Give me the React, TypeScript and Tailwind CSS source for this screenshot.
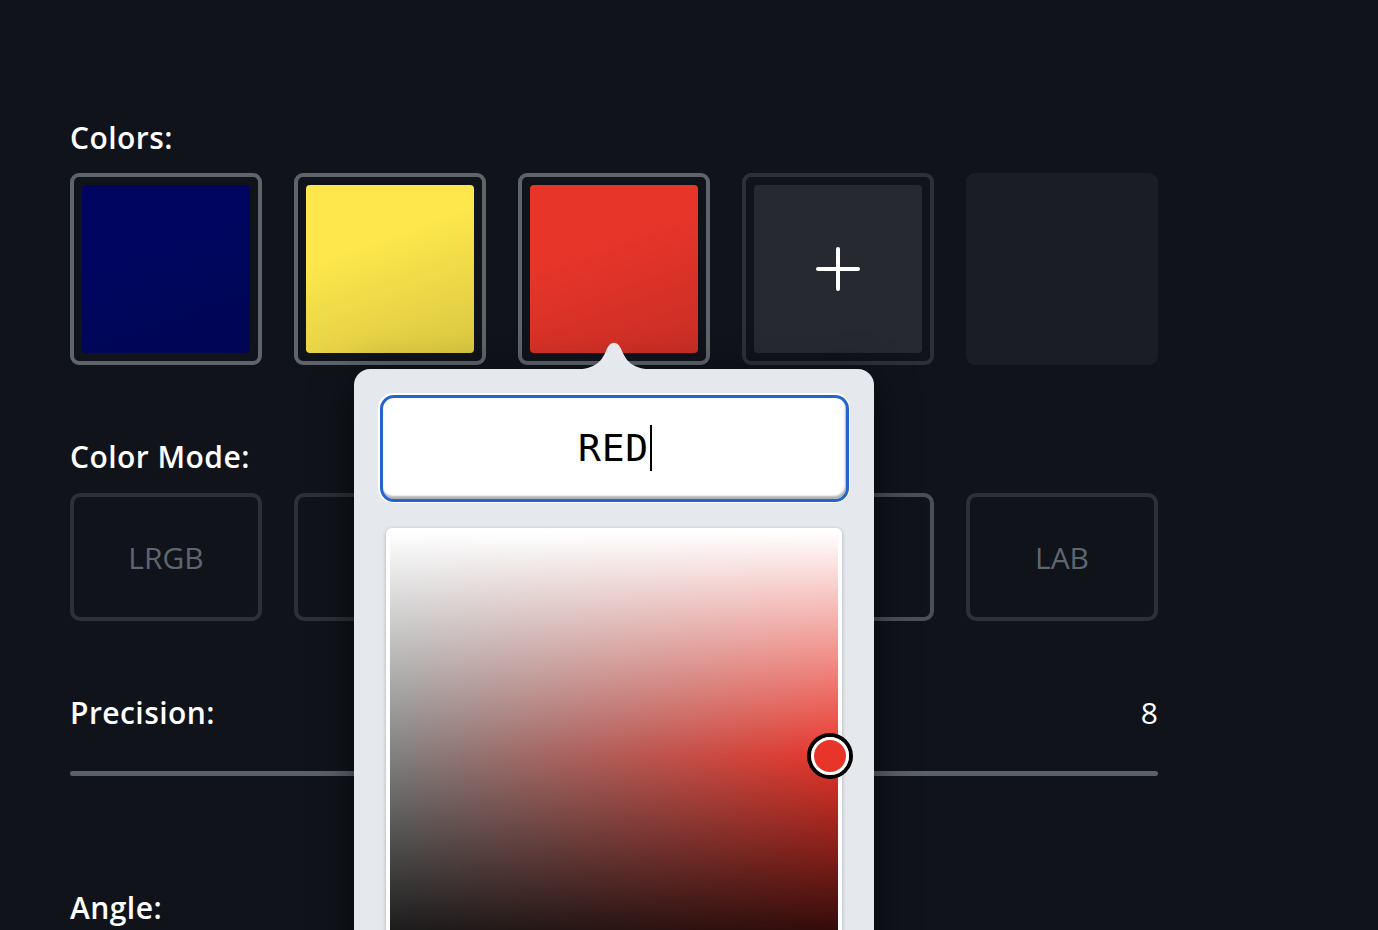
import type { ReactNode } from 'react';

// ─── Data ────────────────────────────────────────────────────

const SWATCHES = [
  { id: 'blue', fill: 'bg-[#000660]' },
  { id: 'yellow', fill: 'bg-[#fde74c]' },
  { id: 'red', fill: 'bg-[#e8352a]' },
];

const MODES = [
  { id: 'lrgb', label: 'LRGB', active: false },
  { id: 'rgb', label: 'RGB', active: false },
  { id: 'hsl', label: 'HSL', active: false },
  { id: 'lch', label: 'LCH', active: true },
  { id: 'lab', label: 'LAB', active: false },
];

// ─── Pieces ──────────────────────────────────────────────────

function Label({ children }: { children: ReactNode }) {
  return (
    <div className="text-[30px] font-semibold leading-[36px] tracking-[0.015em] text-white">
      {children}
    </div>
  );
}

function Swatch({ fill }: { fill: string }) {
  return (
    <div className="h-[192px] w-[192px] rounded-[9px] border-4 border-[#5d646c] p-[8px]">
      <div className={`relative h-full w-full overflow-hidden rounded-[4px] ${fill}`}>
        <div className="absolute inset-0 bg-[linear-gradient(160deg,transparent_35%,rgba(0,0,0,0.14))]" />
      </div>
    </div>
  );
}

function AddSwatch() {
  return (
    <button className="h-[192px] w-[192px] rounded-[9px] border-4 border-[#2c3138] p-[8px]">
      <div className="flex h-full w-full items-center justify-center rounded-[4px] bg-[#26292f]">
        <svg width="46" height="46" viewBox="0 0 46 46" fill="none" stroke="white" strokeWidth="4" strokeLinecap="round">
          <line x1="23" y1="3" x2="23" y2="43" />
          <line x1="3" y1="23" x2="43" y2="23" />
        </svg>
      </div>
    </button>
  );
}

function ColorPopover() {
  return (
    <div className="absolute left-[284px] top-[196px] z-10 h-[640px] w-[520px] rounded-[16px] bg-[#e5e8ec] px-[24px] pt-[24px] shadow-[0_10px_40px_rgba(0,0,0,0.55)]">
      {/* Arrow */}
      <svg className="absolute left-[212px] top-[-31px]" width="96" height="32" viewBox="0 0 96 32">
        <path d="M0 32 C 26 32, 34 27, 40 13 C 44 2, 52 2, 56 13 C 62 27, 70 32, 96 32 Z" fill="#e5e8ec" />
      </svg>

      {/* Name input */}
      <div className="rounded-[15px] bg-white p-[1.5px]">
        <div className="flex h-[107px] items-center justify-center rounded-[14px] border-[3px] border-[#2563d0] bg-white shadow-[inset_-1px_-3px_2px_rgba(0,0,0,0.3)]">
          <span className="pl-[2px] text-[38px] leading-none tracking-[0.02em] text-black [font-family:'DejaVu_Sans_Mono',monospace]">
            RED
          </span>
          <span className="ml-[1px] h-[46px] w-[2px] bg-black" />
        </div>
      </div>

      {/* Saturation / lightness area */}
      <div className="mx-[8px] mt-[25px] rounded-[6px] bg-white p-[4px] shadow-[0_1px_4px_rgba(0,0,0,0.25)]">
        <div className="relative h-[448px] w-full rounded-[3px] bg-[linear-gradient(to_bottom,#fff,rgba(255,255,255,0)_50%,rgba(0,0,0,0)_50%,#000),linear-gradient(to_right,#808080,#e8352a)]">
          <div className="absolute left-[417px] top-[201px] h-[46px] w-[46px] rounded-full border-4 border-black">
            <div className="h-full w-full rounded-full border-[3px] border-white bg-[#e8352a]" />
          </div>
        </div>
      </div>
    </div>
  );
}

// ─── Page ────────────────────────────────────────────────────

export default function App() {
  return (
    <main className="h-screen w-full overflow-hidden bg-[#10131a] px-[70px] pt-[120px] [font-family:'Open_Sans','Noto_Sans',sans-serif]">
      <div className="w-[1088px]">
        {/* Colors */}
        <Label>Colors:</Label>
        <div className="relative mt-[17px] flex gap-[32px]">
          {SWATCHES.map((s) => (
            <Swatch key={s.id} fill={s.fill} />
          ))}
          <AddSwatch />
          <div className="h-[192px] w-[192px] rounded-[9px] bg-[#1a1d24]" />
          <ColorPopover />
        </div>

        {/* Color mode */}
        <div className="mt-[74px]">
          <Label>Color Mode:</Label>
        </div>
        <div className="mt-[18px] flex gap-[32px]">
          {MODES.map((m) => (
            <button
              key={m.id}
              className={`flex h-[128px] w-[192px] items-center justify-center rounded-[10px] border-4 text-[30px] text-[#5f6670] ${
                m.active ? 'border-[#4a5058]' : 'border-[#2c3138]'
              }`}
            >
              {m.label}
            </button>
          ))}
        </div>

        {/* Precision */}
        <div className="mt-[74px] flex items-center justify-between">
          <Label>Precision:</Label>
          <span className="text-[30px] leading-[36px] text-white">8</span>
        </div>
        <div className="mt-[40px] h-[5px] w-full rounded-full bg-[#5b6169]" />

        {/* Angle */}
        <div className="mt-[114px]">
          <Label>Angle:</Label>
        </div>
      </div>
    </main>
  );
}
